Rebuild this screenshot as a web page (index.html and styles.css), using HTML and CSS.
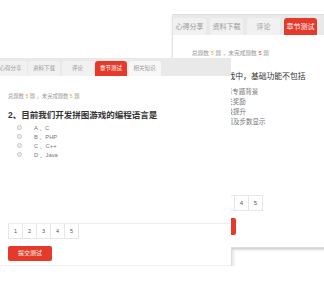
FILE: index.html
```html
<!DOCTYPE html>
<html>
<head>
  <meta charset="UTF-8">
  <title>章节测试</title>
  <link rel="stylesheet" href="styles.css">
</head>
<body>
  <div class="stage">
    <div class="card back">
      <div class="tabs">
        <span class="tab">心得分享</span>
        <span class="tab">资料下载</span>
        <span class="tab">评论</span>
        <span class="tab on">章节测试</span>
      </div>
      <div class="body">
        <p class="count">总题数 <b class="n1">5</b> 题 ，未完成题数 <b class="n2">5</b> 题</p>
        <p class="question">1、拼图游戏中，基础功能不包括</p>
        <ul class="options">
          <li><i class="radio"></i>A 、选择专题背景</li>
          <li><i class="radio"></i>B 、过关奖励</li>
          <li><i class="radio"></i>C 、等级提升</li>
          <li><i class="radio"></i>D 、时间及步数显示</li>
        </ul>
        <div class="pager">
          <span>1</span><span>2</span><span>3</span><span>4</span><span>5</span>
        </div>
        <a href="javascript:;" class="submit">提交测试</a>
      </div>
    </div>

    <div class="shade"></div>

    <div class="card front">
      <div class="tabs">
        <span class="tab">心得分享</span>
        <span class="tab">资料下载</span>
        <span class="tab">评论</span>
        <span class="tab on">章节测试</span>
        <span class="tab light">相关知识</span>
      </div>
      <div class="body">
        <p class="count">总题数 <b class="n1">5</b> 题 ，未完成题数 <b class="n1">5</b> 题</p>
        <p class="question">2、目前我们开发拼图游戏的编程语言是</p>
        <ul class="options">
          <li><i class="radio"></i>A 、C</li>
          <li><i class="radio"></i>B 、PHP</li>
          <li><i class="radio"></i>C 、C++</li>
          <li><i class="radio"></i>D 、Java</li>
        </ul>
        <div class="pager">
          <span>1</span><span>2</span><span>3</span><span>4</span><span>5</span>
        </div>
        <a href="javascript:;" class="submit">提交测试</a>
      </div>
    </div>
  </div>
</body>
</html>
```
FILE: styles.css
```css
* {
  margin: 0;
  padding: 0;
}
a {
  text-decoration: none;
}
ul {
  list-style: none;
}
body {
  background: #fff;
  font-family: "Liberation Sans", "Noto Sans CJK SC", sans-serif;
}
.stage {
  position: relative;
  width: 324px;
  height: 281px;
  overflow: hidden;
}
.card {
  position: absolute;
  background: #fff;
}
.tabs {
  display: flex;
  background: #e9e9e9;
}
.tab {
  flex: none;
  text-align: center;
  color: #999;
  background: #f1f1f1;
  border-radius: 3px 3px 0 0;
}
.tab.light {
  background: #f7f7f7;
}
.tab.on {
  background: #e5392a;
  color: #fff;
}
.count {
  color: #999;
}
.count b {
  font-weight: normal;
}
.count .n1 {
  color: #f5a623;
}
.count .n2 {
  color: #e5392a;
}
.question {
  color: #333;
  font-weight: bold;
}
.options li {
  display: flex;
  align-items: center;
  color: #777;
}
.radio {
  flex: none;
  border-radius: 50%;
  border: 1px solid #c8c8c8;
  background: #eee;
  box-sizing: border-box;
}
.pager {
  display: flex;
  border-top: 1px solid #eee;
}
.pager span {
  flex: none;
  box-sizing: border-box;
  border: 1px solid #e6e6e6;
  border-top: none;
  margin-left: -1px;
  text-align: center;
  color: #555;
  background: #fff;
}
.pager span:first-child {
  margin-left: 0;
}
.submit {
  display: block;
  background: #e5392a;
  color: #fff;
  text-align: center;
  border-radius: 2px;
}

/* card behind */
.back {
  left: 172px;
  top: 14px;
  width: 170px;
  height: 232px;
  border-top: 1px solid #ddd;
  border-left: 1px solid #e4e4e4;
  box-shadow: 0 2px 2px rgba(0, 0, 0, 0.12);
}
.back .tabs {
  height: 20px;
  padding-top: 3px;
  box-sizing: border-box;
  gap: 4px;
}
.back .tab {
  width: 33px;
  height: 17px;
  line-height: 17px;
  font-size: 7px;
}
.back .body {
  padding-left: 19px;
}
.back .count {
  margin-top: 14px;
  font-size: 5.7px;
  line-height: 8px;
}
.back .question {
  margin-top: 14px;
  font-size: 7.8px;
  line-height: 12px;
  font-weight: normal;
}
.back .options {
  margin-top: 3px;
}
.back .options li {
  font-size: 6.5px;
  height: 10px;
}
.back .radio {
  width: 6px;
  height: 6px;
  margin: 0 9px 0 0;
}
.back .pager {
  margin-top: 69px;
  border-top: none;
}
.back .pager span {
  width: 15px;
  height: 16px;
  line-height: 15px;
  font-size: 6px;
  border-top: 1px solid #e6e6e6;
}
.back .submit {
  margin-top: 7px;
  width: 44px;
  height: 17px;
  line-height: 17px;
  font-size: 7px;
}

/* corner of a third page */
.shade {
  position: absolute;
  left: 231px;
  top: 247px;
  width: 100px;
  height: 18px;
  border-top: 1px solid #ddd;
  border-left: 1px solid #ddd;
  box-shadow: inset 2px 2px 3px rgba(0, 0, 0, 0.1);
}

/* card in front */
.front {
  left: -12px;
  top: 58px;
  width: 243px;
  height: 207px;
  border-bottom: 1px solid #f0f0f0;
}
.front .tabs {
  height: 18px;
  padding: 3px 0 0 6.5px;
  box-sizing: border-box;
  gap: 1.5px;
}
.front .tab {
  width: 32px;
  height: 15px;
  line-height: 15px;
  font-size: 5.5px;
}
.front .body {
  padding-left: 20px;
}
.front .count {
  margin-top: 16px;
  font-size: 5.3px;
  line-height: 8px;
}
.front .question {
  margin-top: 9.5px;
  font-size: 8.5px;
  line-height: 11px;
}
.front .options {
  margin-top: 2px;
}
.front .options li {
  font-size: 5.8px;
  height: 9px;
}
.front .radio {
  width: 5px;
  height: 5px;
  margin: 0 12px 0 9px;
}
.front .pager {
  margin-top: 64px;
}
.front .pager span {
  width: 15px;
  height: 15px;
  line-height: 14px;
  font-size: 5.5px;
}
.front .submit {
  margin-top: 7px;
  width: 44px;
  height: 15px;
  line-height: 15px;
  font-size: 6px;
}
```
